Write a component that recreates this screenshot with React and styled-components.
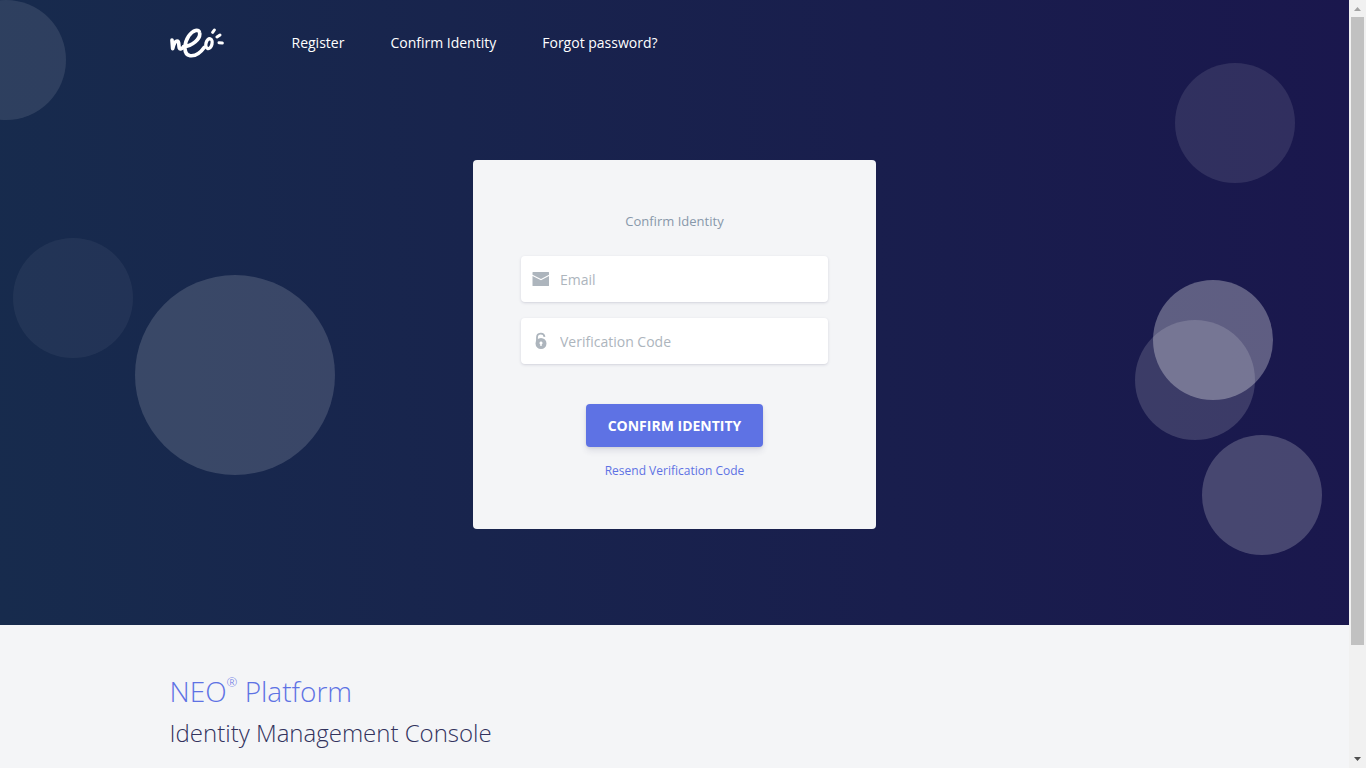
import {useState} from "react";
import styled, {createGlobalStyle, ThemeProvider} from "styled-components";

const theme = {
  primary: '#5e72e4',
  heading: '#32325d',
  muted: '#8898aa',
  placeholder: '#adb5bd',
  surface: '#f4f5f7',
}

const GlobalStyle = createGlobalStyle`
  * {
    box-sizing: border-box;
  }

  body {
    margin: 0;
    font-family: "Open Sans", sans-serif;
    background-color: #f4f5f7;
    overflow: hidden;
  }
`

const Window = styled.div`
  display: flex;
  height: 100vh;
`

const Page = styled.div`
  flex: 1;
  min-width: 0;
  overflow: hidden;
`

const Container = styled.div`
  max-width: 1040px;
  margin: 0 auto;
  padding: 0 15px;
`

const Hero = styled.section`
  position: relative;
  overflow: hidden;
  padding-bottom: 96px;
  background: linear-gradient(87deg, #172b4d 0, #1a174d 100%);
`

const Shapes = styled.div`
  position: absolute;
  inset: 0;
`

const Bubble = styled.span`
  position: absolute;
  top: ${props => props.$top}px;
  left: ${props => props.$left || 'auto'};
  right: ${props => props.$right || 'auto'};
  width: ${props => props.$size || 120}px;
  height: ${props => props.$size || 120}px;
  border-radius: 50%;
  background-color: rgba(255, 255, 255, ${props => props.$opacity});
`

const Header = styled.header`
  position: relative;
`

const Navbar = styled(Container)`
  display: flex;
  align-items: center;
  gap: 67px;
  height: 86px;
`

const LogoLink = styled.a`
  display: block;
  height: 30px;

  svg {
    display: block;
  }
`

const Nav = styled.nav`
  display: flex;
  gap: 46px;
`

const NavLink = styled.a`
  font-size: 14px;
  line-height: 20px;
  color: #fff;
  text-decoration: none;
`

const Card = styled.form`
  position: relative;
  width: 403px;
  max-width: 100%;
  margin: 74px auto 0;
  padding: 48px;
  border-radius: 4px;
  background-color: ${props => props.theme.surface};
  display: flex;
  flex-direction: column;
  align-items: center;
`

const CardTitle = styled.p`
  margin: 0 0 22px;
  font-size: 13px;
  line-height: 26px;
  color: ${props => props.theme.muted};
`

const Field = styled.label`
  display: flex;
  align-items: center;
  gap: 10px;
  width: 100%;
  height: 46px;
  padding: 0 11px;
  margin-bottom: 16px;
  border-radius: 4px;
  background-color: #fff;
  box-shadow: 0 1px 3px rgba(50, 50, 93, .15), 0 1px 0 rgba(0, 0, 0, .02);
  color: ${props => props.theme.placeholder};

  svg {
    flex-shrink: 0;
  }
`

const Input = styled.input`
  flex: 1;
  min-width: 0;
  padding: 2px 0 0;
  border: 0;
  outline: 0;
  background: transparent;
  font-family: inherit;
  font-size: 14px;
  line-height: 20px;
  color: ${props => props.theme.muted};

  &::placeholder {
    color: ${props => props.theme.placeholder};
    opacity: 1;
  }
`

const SubmitButton = styled.button`
  height: 43px;
  margin-top: 24px;
  padding: 0 22px;
  border: 0;
  border-radius: 4px;
  background-color: ${props => props.theme.primary};
  box-shadow: 0 4px 6px rgba(50, 50, 93, .11), 0 1px 3px rgba(0, 0, 0, .08);
  color: #fff;
  font-family: inherit;
  font-size: 14px;
  font-weight: 700;
  line-height: 20px;
  text-transform: uppercase;
  cursor: pointer;
`

const ResendLink = styled.a`
  margin-top: 14px;
  font-size: 12px;
  line-height: 20px;
  color: ${props => props.theme.primary};
  text-decoration: none;
`

const Footer = styled.footer`
  padding: 46px 0;
`

const FooterTitle = styled.h3`
  margin: 0;
  font-size: 28px;
  line-height: 40px;
  font-weight: 300;
  color: ${props => props.theme.primary};

  sup {
    font-size: 13px;
    line-height: 0;
    vertical-align: 15px;
  }
`

const FooterSubtitle = styled.h4`
  margin: 0;
  font-size: 24px;
  line-height: 44px;
  font-weight: 300;
  color: ${props => props.theme.heading};
`

const Scrollbar = styled.div`
  display: flex;
  flex-direction: column;
  align-items: center;
  width: 17px;
  background-color: #f1f1f1;

  svg {
    display: block;
    flex-shrink: 0;
  }
`

const ScrollTrack = styled.div`
  flex: 1;
  width: 13px;
`

const ScrollThumb = styled.div`
  height: 85.6%;
  background-color: #c1c1c1;
`

const bubbles = [
  {top: 0, left: '-4%', opacity: .1},
  {top: 238, left: '1%', opacity: .05},
  {top: 275, left: '10%', size: 200, opacity: .15},
  {top: 63, right: '4%', opacity: .1},
  {top: 280, right: '5.66%', opacity: .3},
  {top: 320, right: '7%', opacity: .15},
  {top: 435, right: '2%', opacity: .2},
]

const links = ['Register', 'Confirm Identity', 'Forgot password?']

const Logo = () => (
  <svg width="55" height="30" viewBox="30 24 165 90" fill="none" stroke="#fff" strokeLinecap="round" strokeLinejoin="round">
    <path strokeWidth="11" d="M36 60 L38 86 C40 74 46 63 51 63 C59 63 55 76 58 84 C60 89 66 86 71 81"/>
    <path strokeWidth="11" d="M71 80 C96 78 122 57 119 39 C117 25 99 30 86 48 C72 69 69 104 90 107 C107 109 122 98 133 82"/>
    <ellipse strokeWidth="10" cx="147" cy="71" rx="9" ry="15" transform="rotate(14 147 71)"/>
    <path strokeWidth="9" d="M158 37 L163 30 M171 51 L180 45 M177 68 L187 69"/>
  </svg>
)

const MailIcon = () => (
  <svg width="18" height="16" viewBox="0 0 18 16" fill="currentColor" aria-hidden="true">
    <path d="M1 1h15.500a.5.5 0 0 1 .5.5V3.800L9 8 .5 3.800V1.500A.5.5 0 0 1 1 1z"/>
    <path d="M.5 5L9 9.300 17 5v9.500a.5.5 0 0 1-.5.5H1a.5.5 0 0 1-.5-.5z"/>
  </svg>
)

const LockIcon = () => (
  <svg width="18" height="18" viewBox="0 0 18 18" aria-hidden="true">
    <path d="M5 10V5.500C5 .8 11.800.3 12.500 4.800" fill="none" stroke="currentColor" strokeWidth="1.800"/>
    <path fill="currentColor" fillRule="evenodd" d="M9 6a5.500 5.500 0 1 1 0 11A5.500 5.500 0 0 1 9 6zm0 3.500a1.600 1.600 0 0 0-.7 3V14h1.400v-1.500A1.600 1.600 0 0 0 9 9.500z"/>
  </svg>
)

const App = () => {
  const [email, setEmail] = useState('')
  const [code, setCode] = useState('')

  return (
    <ThemeProvider theme={theme}>
      <GlobalStyle/>
      <Window>
        <Page>
          <Hero>
            <Shapes>
              {bubbles.map(bubble => (
                <Bubble
                  key={bubble.top}
                  $top={bubble.top}
                  $left={bubble.left}
                  $right={bubble.right}
                  $size={bubble.size}
                  $opacity={bubble.opacity}
                />
              ))}
            </Shapes>
            <Header>
              <Navbar>
                <LogoLink href="#" aria-label="neo">
                  <Logo/>
                </LogoLink>
                <Nav>
                  {links.map(link => <NavLink key={link} href="#">{link}</NavLink>)}
                </Nav>
              </Navbar>
            </Header>
            <Card onSubmit={e => e.preventDefault()}>
              <CardTitle>Confirm Identity</CardTitle>
              <Field>
                <MailIcon/>
                <Input type="email" placeholder="Email" aria-label="Email" value={email} onChange={e => setEmail(e.target.value)}/>
              </Field>
              <Field>
                <LockIcon/>
                <Input type="text" placeholder="Verification Code" aria-label="Verification Code" value={code} onChange={e => setCode(e.target.value)}/>
              </Field>
              <SubmitButton type="submit">Confirm Identity</SubmitButton>
              <ResendLink href="#">Resend Verification Code</ResendLink>
            </Card>
          </Hero>
          <Footer>
            <Container>
              <FooterTitle>NEO<sup>®</sup> Platform</FooterTitle>
              <FooterSubtitle>Identity Management Console</FooterSubtitle>
            </Container>
          </Footer>
        </Page>
        <Scrollbar aria-hidden="true">
          <svg width="17" height="17" viewBox="0 0 17 17" fill="#a3a3a3">
            <path d="M5 11l3.500-4L12 11z"/>
          </svg>
          <ScrollTrack>
            <ScrollThumb/>
          </ScrollTrack>
          <svg width="17" height="17" viewBox="0 0 17 17" fill="#505050">
            <path d="M5 6l3.500 4L12 6z"/>
          </svg>
        </Scrollbar>
      </Window>
    </ThemeProvider>
  )
}

export default App
